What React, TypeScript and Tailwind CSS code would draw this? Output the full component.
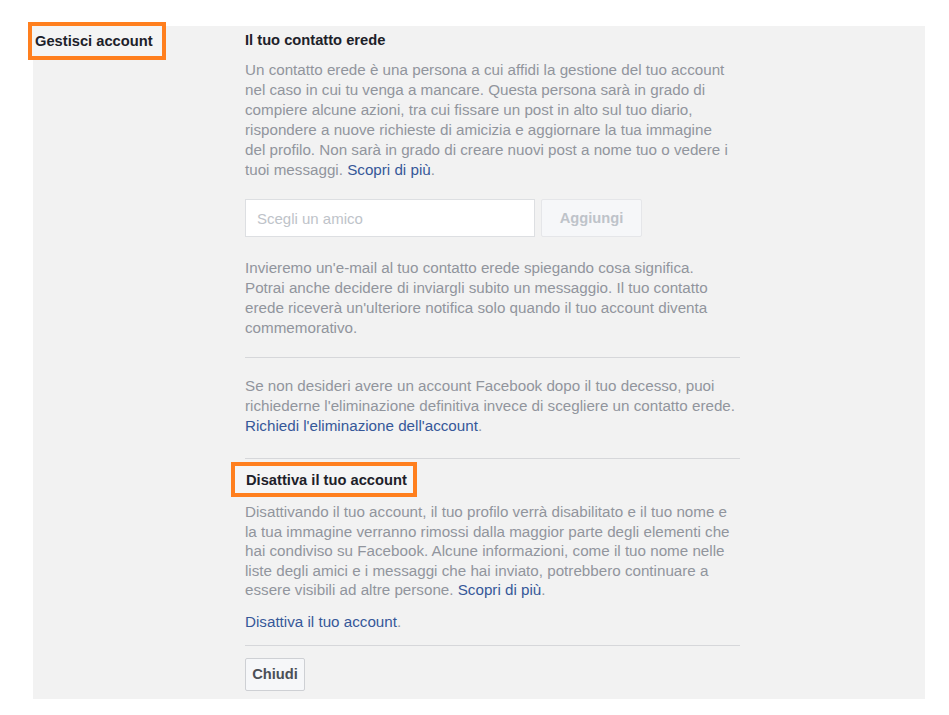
export default function App() {
  return (
    <div className="min-h-[715px] bg-white pt-[26px] font-['Liberation_Sans',Arial,sans-serif]">
      <div className="ml-[33px] mr-[24px] flex bg-[#f2f2f2] pb-[8px]">
        {/* left label, boxed in orange */}
        <div className="w-[212px] shrink-0">
          <div className="-ml-[5px] -mt-[4px] flex h-[38px] w-[138px] items-center border-4 border-[#ff7f1e] bg-[#f4f4f4] pl-[3px]">
            <span className="text-[14.7px] font-bold leading-[18px] text-[#1d2129]">Gestisci account</span>
          </div>
        </div>

        <div className="w-[495px] pt-[5px] text-[15.2px] leading-[20px] text-[#91959d]">
          <h3 className="text-[14.7px] font-bold leading-[18px] text-[#1d2129]">Il tuo contatto erede</h3>
          <p className="mt-[11px]">
            Un contatto erede è una persona a cui affidi la gestione del tuo account<br />
            nel caso in cui tu venga a mancare. Questa persona sarà in grado di<br />
            compiere alcune azioni, tra cui fissare un post in alto sul tuo diario,<br />
            rispondere a nuove richieste di amicizia e aggiornare la tua immagine<br />
            del profilo. Non sarà in grado di creare nuovi post a nome tuo o vedere i<br />
            tuoi messaggi. <a className="text-[#365899]">Scopri di più</a>.
          </p>

          <div className="mt-[19px] flex gap-[6px]">
            <input
              placeholder="Scegli un amico"
              className="h-[38px] w-[290px] border border-[#dddfe2] bg-white px-[11px] text-[15px] text-[#1d2129] outline-none placeholder:text-[#bec3c9]"
            />
            <button className="h-[38px] w-[101px] rounded-[2px] border border-[#e5e6e9] bg-[#f6f7f9] text-[14.7px] font-bold text-[#bec3c9]">
              Aggiungi
            </button>
          </div>

          <p className="mt-[21px]">
            Invieremo un'e-mail al tuo contatto erede spiegando cosa significa.<br />
            Potrai anche decidere di inviargli subito un messaggio. Il tuo contatto<br />
            erede riceverà un'ulteriore notifica solo quando il tuo account diventa<br />
            commemorativo.
          </p>

          <div className="mt-[19px] h-px bg-[#d6d7da]" />

          <p className="mt-[18px]">
            Se non desideri avere un account Facebook dopo il tuo decesso, puoi<br />
            richiederne l'eliminazione definitiva invece di scegliere un contatto erede.<br />
            <a className="text-[#365899]">Richiedi l'eliminazione dell'account</a>.
          </p>

          <div className="mt-[22px] h-px bg-[#d6d7da]" />

          <div className="-ml-[14px] mt-[3px] flex h-[35px] w-[186px] items-center border-[4px] border-[#ff7f1e] bg-[#f5f5f5] pl-[11px]">
            <h3 className="text-[14.7px] font-bold leading-[18px] text-[#1d2129]">Disattiva il tuo account</h3>
          </div>

          <p className="mt-[5px] leading-[19.5px]">
            Disattivando il tuo account, il tuo profilo verrà disabilitato e il tuo nome e<br />
            la tua immagine verranno rimossi dalla maggior parte degli elementi che<br />
            hai condiviso su Facebook. Alcune informazioni, come il tuo nome nelle<br />
            liste degli amici e i messaggi che hai inviato, potrebbero continuare a<br />
            essere visibili ad altre persone. <a className="text-[#365899]">Scopri di più</a>.
          </p>

          <p className="mt-[12px]">
            <a className="text-[#365899]">Disattiva il tuo account</a>.
          </p>

          <div className="mt-[13px] h-px bg-[#d6d7da]" />

          <button className="mt-[12px] h-[33px] w-[60px] rounded-[2px] border border-[#ced0d4] bg-[#f6f7f9] text-[14.7px] font-bold text-[#4b4f56]">
            Chiudi
          </button>
        </div>
      </div>
    </div>
  );
}
